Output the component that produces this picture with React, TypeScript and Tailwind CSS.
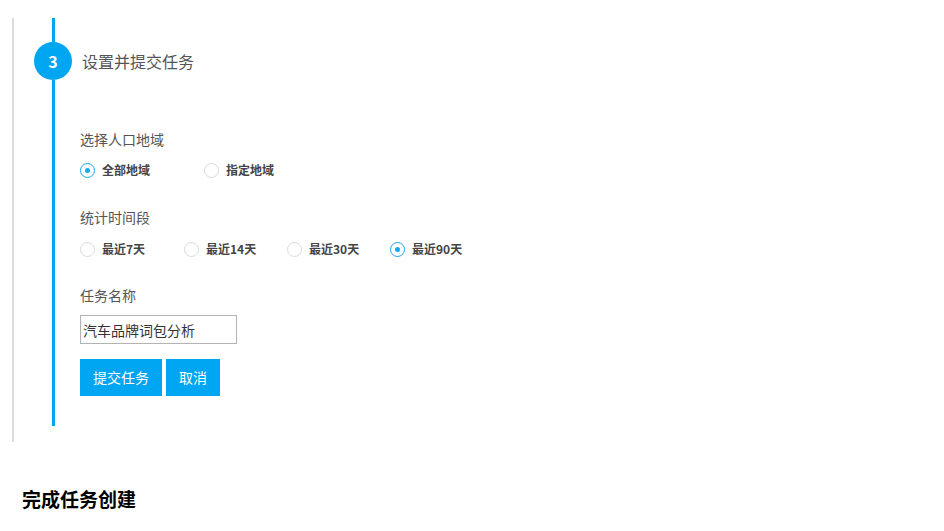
import React from "react";

const font = { fontFamily: '"Noto Sans CJK SC", "Noto Sans", sans-serif' };

function Radio({ checked, label }: { checked?: boolean; label: string }) {
  return (
    <div className="flex items-center gap-[7px]">
      <span
        className={
          checked
            ? "flex h-[15px] w-[15px] items-center justify-center rounded-full border border-[#1aa5f0] bg-white"
            : "flex h-[15px] w-[15px] items-center justify-center rounded-full border border-[#dadada] bg-white"
        }
      >
        {checked && <span className="h-[5px] w-[5px] rounded-full bg-[#1aa5f0]" />}
      </span>
      <span className="text-[12px] font-bold leading-[20px] text-[#444]">{label}</span>
    </div>
  );
}

export default function App() {
  return (
    <div className="min-h-[531px] bg-white pt-[18px]" style={font}>
      <div className="ml-[12px] border-l-2 border-[#dcdcdc] pb-[16px]">
        <div className="flex">
          <div className="ml-[20px] flex w-[38px] flex-col items-center">
            <div className="h-[24px] w-[3px] bg-[#00a6f2]" />
            <div className="flex h-[38px] w-[38px] items-center justify-center rounded-full bg-[#00a6f2] text-[16px] font-bold text-white">
              3
            </div>
            <div className="w-[3px] flex-1 bg-[#00a6f2]" />
          </div>
          <div className="ml-[8px] flex flex-col pt-[24px] pb-[30px]">
            <div className="flex h-[38px] items-center pl-[2px] text-[16px] text-[#555]">设置并提交任务</div>
            <div className="mt-[49px] text-[14px] leading-[20px] text-[#555]">选择人口地域</div>
            <div className="mt-[11px] flex">
              <div className="w-[124px]">
                <Radio checked label="全部地域" />
              </div>
              <div className="w-[124px]">
                <Radio label="指定地域" />
              </div>
            </div>
            <div className="mt-[27px] text-[14px] leading-[20px] text-[#555]">统计时间段</div>
            <div className="mt-[12px] flex">
              <div className="w-[104px]">
                <Radio label="最近7天" />
              </div>
              <div className="w-[103px]">
                <Radio label="最近14天" />
              </div>
              <div className="w-[103px]">
                <Radio label="最近30天" />
              </div>
              <div className="w-[103px]">
                <Radio checked label="最近90天" />
              </div>
            </div>
            <div className="mt-[26px] text-[14px] leading-[20px] text-[#555]">任务名称</div>
            <input
              className="mt-[10px] h-[29px] w-[157px] border border-[#b3b3b3] px-[2px] text-[14px] text-[#333] outline-none"
              style={font}
              defaultValue="汽车品牌词包分析"
            />
            <div className="mt-[15px] flex gap-[4px]">
              <button className="h-[37px] w-[82px] bg-[#00a6f2] text-[14px] text-white" style={font}>
                提交任务
              </button>
              <button className="h-[37px] w-[54px] bg-[#00a6f2] text-[14px] text-white" style={font}>
                取消
              </button>
            </div>
          </div>
        </div>
      </div>
      <div className="ml-[22px] mt-[44px] text-[19px] font-bold leading-[26px] text-black">完成任务创建</div>
    </div>
  );
}
